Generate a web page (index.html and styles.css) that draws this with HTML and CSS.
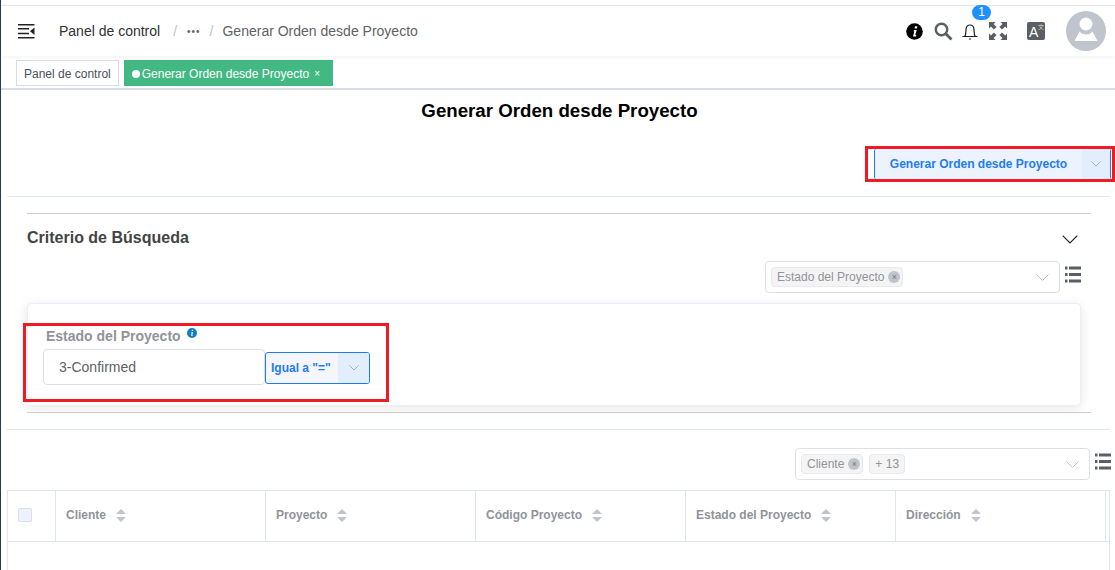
FILE: index.html
```html
<!DOCTYPE html>
<html lang="es">
<head>
<meta charset="utf-8">
<title>Generar Orden desde Proyecto</title>
<link rel="stylesheet" href="styles.css">
</head>
<body>
<div class="app">
  <header class="navbar">
    <svg class="hamburger" width="17" height="15" viewBox="0 0 17 15"><path d="M0 .75h16.500M0 4.750h11M0 9.500h11M0 13.750h16.500" stroke="#222" stroke-width="1.500" fill="none"/><path d="M16.500 3.500v7.500l-4.500-3.700z" fill="#222"/></svg>
    <span class="crumb-first">Panel de control</span>
    <span class="sep">/</span>
    <span class="dots">•••</span>
    <span class="sep sep-second">/</span>
    <span class="crumb-last">Generar Orden desde Proyecto</span>
    <div class="nav-icons">
      <svg class="ic-info" width="17" height="17" viewBox="0 0 17 17"><circle cx="8.500" cy="8.500" r="8.300" fill="#000"/><path d="M9 3.300h2.400l-.5 2.200H8.600zM8 7h2.700l-1.400 5h1l-.4 1.500H7l1.300-5H7.600z" fill="#fff"/></svg>
      <svg class="ic-search" width="19" height="19" viewBox="0 0 19 19"><circle cx="7.500" cy="7.500" r="5.700" stroke="#5a5e66" stroke-width="2.400" fill="none"/><path d="M11.800 11.800l5.700 5.700" stroke="#5a5e66" stroke-width="2.800" fill="none"/></svg>
      <div class="bell-wrap">
        <svg width="16" height="18" viewBox="0 0 16 18"><path d="M.5 14.500h15M2.800 14.500c1.200-2 1-4 1.200-7 .2-2.700 1.900-4.500 4-4.500s3.800 1.800 4 4.500c.2 3 0 5 1.200 7" stroke="#1f1f1f" stroke-width="1.200" fill="none"/><path d="M7 17h2" stroke="#1f1f1f" stroke-width="1.200"/></svg>
        <span class="badge">1</span>
      </div>
      <svg class="ic-full" width="18" height="18" viewBox="0 0 18 18"><path d="M0 0h6.500L4.600 1.900l3 3-2.700 2.700-3-3L0 6.500zM18 0v6.500l-1.900-1.900-3 3-2.700-2.700 3-3L11.500 0zM0 18v-6.500l1.900 1.900 3-3 2.700 2.700-3 3L6.500 18zM18 18h-6.500l1.900-1.900-3-3 2.700-2.700 3 3 1.900-1.900z" fill="#5a5e66"/></svg>
      <div class="lang-box"><span class="lang-a">A</span><span class="lang-x">文</span></div>
      <div class="avatar">
        <svg width="40" height="40" viewBox="0 0 40 40"><circle cx="20" cy="13" r="6.500" fill="#fff"/><path d="M8.500 30l5-9.500c2 2.300 4.200 3 6.500 3s4.500-.7 6.500-3l5 9.500z" fill="#fff"/></svg>
      </div>
    </div>
  </header>

  <div class="tagsbar">
    <a class="tab">Panel de control</a>
    <a class="tab tab-active"><i class="dot"></i>Generar Orden desde Proyecto<span class="tab-x">×</span></a>
  </div>

  <main class="main">
    <h1 class="title">Generar Orden desde Proyecto</h1>
    <div class="actions">
      <div class="split-btn">
        <span class="split-label">Generar Orden desde Proyecto</span>
        <span class="split-arrow"><svg width="10" height="6" viewBox="0 0 10 6"><path d="M.5.500L5 5 9.500.500" stroke="#8ab4ea" fill="none"/></svg></span>
      </div>
    </div>
    <hr class="rule-light">
    <section class="criteria">
      <div class="criteria-head">
        <h2 class="criteria-title">Criterio de Búsqueda</h2>
        <svg class="criteria-chevron" width="16" height="9" viewBox="0 0 16 9"><path d="M.700.700L8 8 15.300.700" stroke="#222" stroke-width="1.200" fill="none"/></svg>
      </div>
      <div class="picker-row">
        <div class="picker">
          <span class="chip">Estado del Proyecto<i class="chip-x">×</i></span>
          <svg class="picker-arrow" width="13" height="7" viewBox="0 0 13 7"><path d="M.500.500L6.500 6.500 12.500.500" stroke="#c0c4cc" fill="none"/></svg>
        </div>
        <svg class="list-ic" width="16" height="17" viewBox="0 0 16 17"><path d="M0 2h2.500M4 2h12M0 8.500h2.500M4 8.500h12M0 15h2.500M4 15h12" stroke="#5a5e66" stroke-width="3" fill="none"/></svg>
      </div>
      <div class="filter-card">
        <div class="field-label">Estado del Proyecto
          <svg class="field-info" width="10" height="10" viewBox="0 0 10 10"><circle cx="5" cy="5" r="5" fill="#0f7fc4"/><path d="M5 1.800h1.300l-.3 1.200H4.800zM4.600 4h1.400l-.7 3h.6l-.2.800H4l.7-3h-.5z" fill="#fff"/></svg>
        </div>
        <div class="field-row">
          <div class="text-input">3-Confirmed</div>
          <div class="op-select">
            <span class="op-label">Igual a "="</span>
            <span class="op-arrow"><svg width="10" height="6" viewBox="0 0 10 6"><path d="M.500.500L5 5 9.500.500" stroke="#8ab4ea" fill="none"/></svg></span>
          </div>
        </div>
      </div>
      <hr class="rule-grey">
    </section>
    <hr class="rule-light rule-table">
    <div class="picker-row picker-row-table">
      <div class="picker">
        <span class="chip">Cliente<i class="chip-x">×</i></span>
        <span class="chip chip-count">+ 13</span>
        <svg class="picker-arrow" width="13" height="7" viewBox="0 0 13 7"><path d="M.500.500L6.500 6.500 12.500.500" stroke="#c0c4cc" fill="none"/></svg>
      </div>
      <svg class="list-ic" width="16" height="17" viewBox="0 0 16 17"><path d="M0 2h2.500M4 2h12M0 8.500h2.500M4 8.500h12M0 15h2.500M4 15h12" stroke="#5a5e66" stroke-width="3" fill="none"/></svg>
    </div>
    <div class="table-wrap">
      <div class="table">
        <div class="cell cell-check"><span class="checkbox"></span></div>
        <div class="cell">Cliente<i class="sort"></i></div>
        <div class="cell">Proyecto<i class="sort"></i></div>
        <div class="cell">Código Proyecto<i class="sort"></i></div>
        <div class="cell">Estado del Proyecto<i class="sort"></i></div>
        <div class="cell">Dirección<i class="sort"></i></div>
      </div>
    </div>
  </main>

  <div class="redbox redbox-btn"></div>
  <div class="redbox redbox-field"></div>
</div>
</body>
</html>
```
FILE: styles.css
```css
* { box-sizing: border-box; }
html, body { margin: 0; height: 570px; overflow: hidden; background: #fff; }
body { font-family: "Liberation Sans", Arial, sans-serif; color: #606266; }
.app { position: relative; width: 1115px; height: 570px; padding-top: 5px; border-left: 1px solid #2b3a4e; overflow: hidden; }

.navbar { display: flex; align-items: center; height: 51px; padding-left: 17px; border-top: 1px solid #e4e6ea; box-shadow: 0 1px 4px rgba(0,21,41,.06); position: relative; }
.hamburger { margin-right: 24px; }
.crumb-first { font-size: 14px; color: #303133; }
.sep { margin: 0 10px 0 13px; font-size: 14px; color: #c0c4cc; }
.sep-second { margin: 0 9px 0 9px; }
.dots { font-size: 10px; color: #606266; letter-spacing: 1px; }
.crumb-last { font-size: 14px; color: #606266; }
.nav-icons { margin-left: auto; display: flex; align-items: center; padding-right: 9px; height: 100%; }
.ic-info { margin-right: 11px; }
.ic-search { margin-right: 9px; }
.bell-wrap { position: relative; width: 16px; height: 18px; margin-right: 11px; }
.badge { position: absolute; left: 10px; top: -17px; width: 19px; height: 15px; border-radius: 8px; background: #1e90ff; color: #fff; font-size: 12px; line-height: 15px; text-align: center; }
.ic-full { margin-right: 20px; }
.lang-box { width: 18px; height: 18px; background: #5a5e66; border-radius: 2px; color: #fff; position: relative; margin-right: 21px; }
.lang-a { position: absolute; left: 2px; top: 3px; font-size: 14px; line-height: 15px; }
.lang-x { position: absolute; right: 1px; top: 1px; font-size: 6px; line-height: 7px; font-family: "Noto Sans CJK SC", sans-serif; color: #d8dadd; }
.avatar { width: 40px; height: 40px; border-radius: 50%; background: #c0c4cc; }
.avatar svg { display: block; }

.tagsbar { display: flex; align-items: flex-start; gap: 5px; height: 34px; padding: 4px 0 0 15px; border-bottom: 2px solid #d8dce5; }
.tab { display: flex; align-items: center; height: 26px; padding: 1px 7px 0; font-size: 12px; color: #495060; background: #fff; border: 1px solid #d8dce5; }
.tab-active { background: #42b983; border-color: #42b983; color: #fff; padding: 1px 12px 0 7px; }
.dot { width: 8px; height: 8px; border-radius: 50%; background: #fff; margin-right: 2px; }
.tab-x { margin-left: 5px; font-size: 10px; }

.main { padding: 0 5px 0 6px; }
.title { margin: 10px 0 0; padding-left: 2px; font-size: 18.7px; line-height: 22px; font-weight: 700; color: #000; text-align: center; }
.actions { display: flex; justify-content: flex-end; height: 74px; padding: 27px 0 0; margin-right: -1px; }
.split-btn { display: flex; width: 237px; height: 30px; background: #ecf3fe; border-left: 1px solid #1a7cf0; border-right: 1px solid #1a7cf0; border-radius: 2px; }
.split-label { flex: 1; font-size: 12px; font-weight: 700; line-height: 30px; color: #1f7cf2; text-align: center; }
.split-arrow { width: 28px; background: #e3eefc; display: flex; align-items: center; justify-content: center; }
.rule-light { margin: 0; border: 0; border-top: 1px solid #e1e7f0; }

.criteria { padding: 16px 19px 0 20px; }
.criteria-head { display: flex; justify-content: space-between; align-items: center; height: 48px; border-top: 1px solid #ccc; padding-right: 13px; }
.criteria-title { margin: 0; font-size: 16px; font-weight: 700; color: #444; }
.criteria-chevron { margin-top: 3px; }
.picker-row { display: flex; justify-content: flex-end; align-items: flex-start; gap: 5px; height: 32px; padding-right: 10px; }
.picker { display: flex; align-items: center; gap: 6px; position: relative; width: 295px; height: 32px; padding: 0 5px; border: 1px solid #dcdfe6; border-radius: 4px; }
.chip { display: inline-flex; align-items: center; height: 20px; padding: 0 2px 1px 5px; font-size: 12px; color: #909399; background: #f4f4f5; border: 1px solid #e9e9eb; border-radius: 4px; white-space: nowrap; }
.chip-count { padding: 0 5px 1px; }
.chip-x { display: inline-block; width: 12px; height: 12px; margin-left: 4px; border-radius: 50%; background: #c0c4cc; color: #777; font-size: 9px; line-height: 12px; text-align: center; font-style: normal; }
.picker-arrow { position: absolute; right: 10px; top: 12px; }
.list-ic { margin-top: 5px; }

.filter-card { height: 103px; margin: 10px 10px 0 0; padding: 24px 0 0 15px; border: 1px solid #ebeef5; border-radius: 4px; box-shadow: 0 2px 12px rgba(0,0,0,.1); }
.field-label { height: 21px; padding-left: 3px; font-size: 14px; font-weight: 700; line-height: 15px; color: #909399; position: relative; }
.field-info { margin-left: 3px; vertical-align: 3px; }
.field-row { display: flex; align-items: center; }
.text-input { width: 222px; height: 36px; padding: 0 15px; font-size: 14px; line-height: 35px; color: #606266; border: 1px solid #dcdfe6; border-radius: 4px; }
.op-select { display: flex; width: 105px; height: 32px; margin-top: 2px; background: #f4f6fb; border: 1px solid #1a7cf0; border-radius: 3px; overflow: hidden; }
.op-label { flex: 1; padding-left: 5px; font-size: 12px; font-weight: 700; line-height: 30px; color: #1f7cf2; }
.op-arrow { width: 31px; background: #e3eefc; display: flex; align-items: center; justify-content: center; }
.rule-grey { margin: 6px 0 0; border: 0; border-top: 1px solid #ccc; }

.rule-table { margin-top: 16px; }
.picker-row-table { margin-top: 18px; padding-right: 0; margin-right: -1px; }

.table-wrap { height: 90px; margin-top: 10px; border: 1px solid #e1e5ec; }
.table { display: grid; grid-template-columns: 48px 210px 210px 210px 210px 210px; height: 51px; border-bottom: 1px solid #e1e5ec; }
.cell { display: flex; align-items: center; padding: 0 0 2px 10px; font-size: 12px; font-weight: 700; color: #909399; border-right: 1px solid #e1e5ec; }
.checkbox { width: 14px; height: 14px; background: #edf2fc; border: 1px solid #dcdfe6; border-radius: 2px; }
.sort { position: relative; display: inline-block; width: 10px; height: 13px; margin-left: 10px; }
.sort::before, .sort::after { content: ""; position: absolute; left: 0; border-left: 5px solid transparent; border-right: 5px solid transparent; }
.sort::before { top: 0; border-bottom: 5px solid #c0c4cc; }
.sort::after { bottom: 0; border-top: 5px solid #c0c4cc; }

.redbox { position: absolute; border: 3px solid #ed1c24; pointer-events: none; }
.redbox-btn { left: 864px; top: 146px; width: 250px; height: 36px; }
.redbox-field { left: 22px; top: 323px; width: 366px; height: 79px; }
```
